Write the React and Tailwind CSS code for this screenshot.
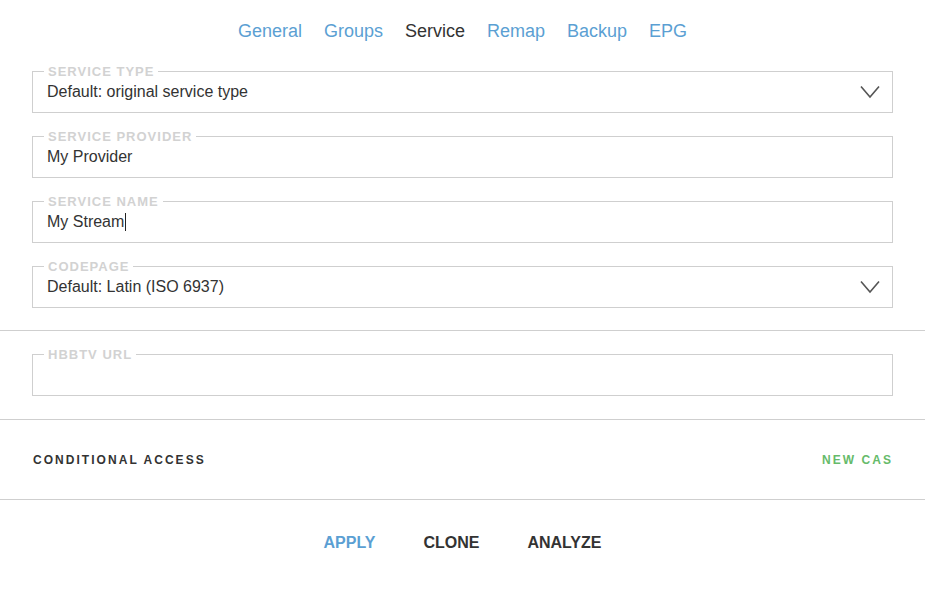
import React from 'react';

const tabs = ['General', 'Groups', 'Service', 'Remap', 'Backup', 'EPG'];

function Chevron() {
  return (
    <svg width="20" height="14" viewBox="0 0 20 14" className="shrink-0">
      <path d="M1 1.5 L10 12 L19 1.5" fill="none" stroke="#555" strokeWidth="1.6" />
    </svg>
  );
}

function Field({ label, value, select, caret, className = '' }) {
  return (
    <fieldset className={`border border-[#cfcfcf] pl-[14px] pr-[12px] ${className}`}>
      <legend className="ml-[-3px] px-[4px] text-[13px] leading-[13px] font-bold tracking-[1px] text-[#d2d2d2] uppercase">
        {label}
      </legend>
      <div className="flex h-[28px] items-center justify-between mb-[6px]">
        <span className="flex items-center text-[16px] text-[#333]">
          {value}
          {caret && <span className="ml-[1px] inline-block h-[18px] w-[1px] bg-[#222]" />}
        </span>
        {select && <Chevron />}
      </div>
    </fieldset>
  );
}

export default function App() {
  return (
    <div className="w-[925px] h-[596px] bg-white font-['Liberation_Sans',Arial,sans-serif]">
      <nav className="flex justify-center gap-[22px] pt-[20px] text-[18px] leading-[22px]">
        {tabs.map((t) => (
          <span key={t} className={t === 'Service' ? 'text-[#333]' : 'text-[#5b9fd3]'}>
            {t}
          </span>
        ))}
      </nav>

      <div className="px-[32px] pt-[23px] flex flex-col gap-[17px]">
        <Field label="Service type" value="Default: original service type" select />
        <Field label="Service provider" value="My Provider" />
        <Field label="Service name" value="My Stream" caret />
        <Field label="Codepage" value="Default: Latin (ISO 6937)" select />
      </div>

      <div className="mt-[22px] border-t border-[#cfcfcf] px-[32px] pt-[17px] pb-[23px]">
        <Field label="HbbTV URL" value="" />
      </div>

      <div className="flex h-[81px] items-center justify-between border-y border-[#cfcfcf] pl-[33px] pr-[32px] text-[12px] font-bold tracking-[0.17em]">
        <span className="text-[#333]">CONDITIONAL ACCESS</span>
        <span className="text-[#66bb6a]">NEW CAS</span>
      </div>

      <div className="flex justify-center gap-[48px] pt-[33px] text-[16px] font-bold leading-[20px]">
        <span className="text-[#5b9fd3]">APPLY</span>
        <span className="text-[#333]">CLONE</span>
        <span className="text-[#333]">ANALYZE</span>
      </div>
    </div>
  );
}
